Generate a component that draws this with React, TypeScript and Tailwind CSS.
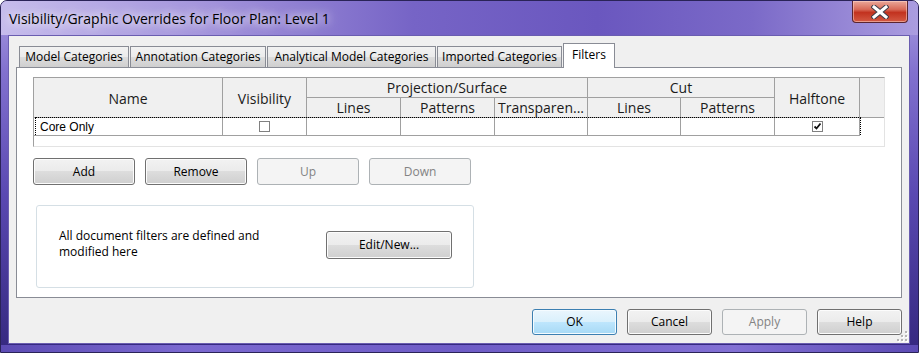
import type { ReactNode } from 'react'

// ── Small pieces ──────────────────────────────────────────────────────────────

function CloseGlyph() {
  return (
    <svg width="18" height="14" viewBox="0 0 18 14" aria-hidden="true">
      <path d="M3 2 L15 12 M15 2 L3 12" stroke="#3d3d4a" strokeWidth="5" strokeLinecap="square" />
      <path d="M3 2 L15 12 M15 2 L3 12" stroke="#ffffff" strokeWidth="3" strokeLinecap="square" />
    </svg>
  )
}

function Check({ checked }: { checked?: boolean }) {
  return (
    <span className="flex h-[11px] w-[11px] items-center justify-center border border-[#808080] bg-white">
      {checked && (
        <svg width="9" height="9" viewBox="0 0 9 9" aria-hidden="true">
          <path d="M1.5 4.5 L3.5 6.5 L7.5 1.5" fill="none" stroke="#111" strokeWidth="1.8" />
        </svg>
      )}
    </span>
  )
}

function WinButton({ label, kind = 'normal', className = '' }: {
  label:      string
  kind?:      'normal' | 'disabled' | 'primary'
  className?: string
}) {
  const look =
    kind === 'disabled'
      ? 'border-[#adb2b5] bg-[#f4f4f4] text-[#838383]'
      : kind === 'primary'
        ? 'border-[#3c7fb1] bg-[linear-gradient(180deg,#eaf6fd_0%,#d9f0fc_50%,#bee6fd_50%,#a7d9f5_100%)] text-black shadow-[inset_0_0_0_1px_#f4fbff]'
        : 'border-[#707070] bg-[linear-gradient(180deg,#f2f2f2_0%,#ebebeb_50%,#dddddd_50%,#cfcfcf_100%)] text-black shadow-[inset_0_0_0_1px_#fcfcfc]'
  return (
    <div className={`flex items-center justify-center rounded-[3px] border text-[12px] ${look} ${className}`}>
      {label}
    </div>
  )
}

function Tab({ label, width, active }: { label: string; width: string; active?: boolean }) {
  if (active) {
    return (
      <div className={`relative z-10 -mb-px flex h-[25px] items-start justify-center border border-b-0 border-[#898c95] bg-white pt-[2px] text-[12px] ${width}`}>
        {label}
      </div>
    )
  }
  return (
    <div className={`flex h-[21px] items-center justify-center border border-b-0 border-[#898c95] bg-[linear-gradient(180deg,#f2f2f2_0%,#ebebeb_50%,#dddddd_50%,#cfcfcf_100%)] text-[12px] ${width}`}>
      {label}
    </div>
  )
}

// ── Filter grid ───────────────────────────────────────────────────────────────

function Head({ children, className = '' }: { children?: ReactNode; className?: string }) {
  return (
    <div className={`flex items-center justify-center border-b border-r border-[#a0a0a0] bg-[#f0f0f0] text-[14px] text-[#1b1b1b] ${className}`}>
      {children}
    </div>
  )
}

function Cell({ children, className = '' }: { children?: ReactNode; className?: string }) {
  return (
    <div className={`flex items-center border-b border-r border-[#a0a0a0] bg-white ${className}`}>
      {children}
    </div>
  )
}

function FilterGrid() {
  return (
    <div className="relative h-[70px] w-[852px] border border-b-[#e3e3e3] border-l-[#a0a0a0] border-r-[#e3e3e3] border-t-[#a0a0a0] bg-white">
      <div className="grid grid-cols-[189px_84px_94px_94px_93px_93px_94px_85px_1fr] grid-rows-[20px_20px_18px]">
        <Head className="row-span-2 pt-[2px]">Name</Head>
        <Head className="row-span-2 pt-[2px]">Visibility</Head>
        <Head className="col-span-3">Projection/Surface</Head>
        <Head className="col-span-2">Cut</Head>
        <Head className="row-span-2 pt-[2px]">Halftone</Head>
        <Head className="row-span-2 border-r-0" />
        <Head>Lines</Head>
        <Head>Patterns</Head>
        <Head>Transparen...</Head>
        <Head>Lines</Head>
        <Head>Patterns</Head>

        <Cell className="pl-[6px] font-['Liberation_Sans',sans-serif] text-[12px] text-black">Core Only</Cell>
        <Cell className="justify-center"><Check /></Cell>
        <Cell />
        <Cell />
        <Cell />
        <Cell />
        <Cell />
        <Cell className="justify-center"><Check checked /></Cell>
        <div className="bg-white" />
      </div>
      {/* focus rectangle on the selected row */}
      <div className="pointer-events-none absolute left-[1px] top-[39px] h-[18px] w-[826px] border border-b-0 border-dotted border-black" />
    </div>
  )
}

// ── Dialog ────────────────────────────────────────────────────────────────────

export default function App() {
  return (
    <div className="relative flex h-[353px] w-[919px] flex-col overflow-hidden rounded-t-[7px] border border-[#2a2358] bg-[linear-gradient(180deg,#a99de0_0%,#8271cf_20%,#5a49b2_55%,#35287f_100%)] font-['Open_Sans',sans-serif] text-black">
      {/* Title bar */}
      <div className="flex h-[34px] shrink-0 items-center bg-[linear-gradient(90deg,#c6bcec_0%,#a495dc_22%,#7664c6_45%,#6a57bf_65%,#7b6ac8_82%,#ab9de0_100%)] pl-[8px]">
        <span className="text-[14px] [text-shadow:0_0_8px_#ffffff,0_0_14px_#ffffff]">
          Visibility/Graphic Overrides for Floor Plan: Level 1
        </span>
      </div>

      <div className="absolute right-[10px] top-0 flex h-[22px] w-[56px] items-center justify-center rounded-b-[4px] border border-t-0 border-[#5a2530] bg-[linear-gradient(180deg,#eaa89a_0%,#d86a58_40%,#c2321f_55%,#d45a44_100%)] shadow-[inset_0_0_0_1px_rgba(255,220,210,0.5)]">
        <CloseGlyph />
      </div>

      {/* Client area */}
      <div className="relative ml-[7px] flex h-[309px] w-[902px] shrink-0 flex-col border border-[#6a5db0] bg-[#f0f0f0] px-[7px] pt-[8px]">
        {/* Tabs */}
        <div className="flex h-[23px] items-end gap-px pl-[3px]">
          <Tab label="Model Categories" width="w-[110px]" />
          <Tab label="Annotation Categories" width="w-[136px]" />
          <Tab label="Analytical Model Categories" width="w-[169px]" />
          <Tab label="Imported Categories" width="w-[125px]" />
          <Tab label="Filters" width="w-[52px]" active />
        </div>

        {/* Tab page */}
        <div className="flex h-[231px] w-[886px] flex-col border border-[#898c95] bg-white pl-[16px] pt-[9px]">
          <FilterGrid />

          <div className="mt-[11px] flex gap-[10px]">
            <WinButton label="Add" className="h-[27px] w-[102px]" />
            <WinButton label="Remove" className="h-[27px] w-[102px]" />
            <WinButton label="Up" kind="disabled" className="h-[27px] w-[102px]" />
            <WinButton label="Down" kind="disabled" className="h-[27px] w-[102px]" />
          </div>

          <div className="ml-[3px] mt-[20px] flex h-[83px] w-[438px] items-center rounded-[3px] border border-[#d5dfe5] bg-white pb-[4px] pl-[22px]">
            <p className="mb-[2px] w-[267px] text-[12px] leading-[16px]">
              All document filters are defined and
              <br />
              modified here
            </p>
            <WinButton label="Edit/New..." className="h-[28px] w-[126px]" />
          </div>
        </div>

        {/* Footer */}
        <div className="mt-[11px] flex justify-end gap-[10px]">
          <WinButton label="OK" kind="primary" className="h-[26px] w-[85px]" />
          <WinButton label="Cancel" className="h-[26px] w-[85px]" />
          <WinButton label="Apply" kind="disabled" className="h-[26px] w-[85px]" />
          <WinButton label="Help" className="h-[26px] w-[85px]" />
        </div>

        {/* Size grip */}
        <svg className="absolute bottom-[1px] right-[1px]" width="11" height="11" viewBox="0 0 11 11" aria-hidden="true">
          {[[8, 0], [4, 4], [8, 4], [0, 8], [4, 8], [8, 8]].map(([x, y]) => (
            <g key={`${x}-${y}`}>
              <rect x={x + 1} y={y + 1} width="2" height="2" fill="#ffffff" />
              <rect x={x} y={y} width="2" height="2" fill="#b4b4b4" />
            </g>
          ))}
        </svg>
      </div>

      {/* Bottom frame */}
      <div className="mt-[1px] h-full bg-[linear-gradient(90deg,#5c4bb4_0%,#7b69d0_20%,#6e5cc6_50%,#8270d4_80%,#5c4bb4_100%)]" />
    </div>
  )
}
